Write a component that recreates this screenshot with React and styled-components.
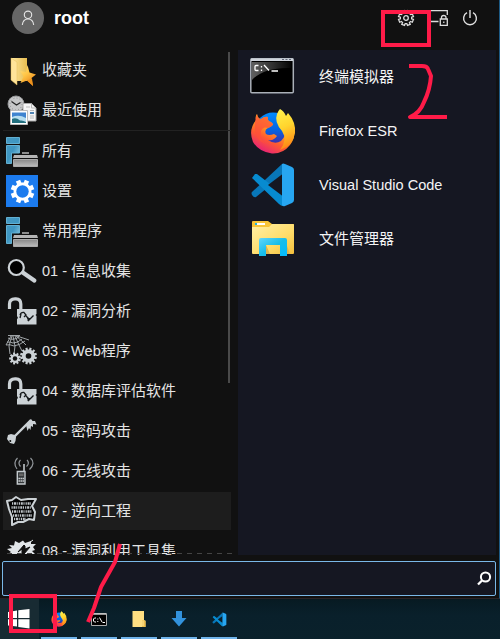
import React from 'react';
import styled, { createGlobalStyle } from 'styled-components';

const Global = createGlobalStyle`
  * { box-sizing: border-box; }
  html, body { margin: 0; padding: 0; }
  body { background: #08202a; overflow: hidden; }
`;

const Screen = styled.div`
  position: relative;
  width: 500px;
  height: 639px;
  overflow: hidden;
  display: flex;
  flex-direction: column;
  font-family: "Liberation Sans", "Noto Sans CJK SC", sans-serif;
  font-size: 15px;
  color: #e4e4e4;
`;

const MenuWindow = styled.div`
  display: flex;
  flex-direction: column;
  height: 599px;
  background: #111;
  border-right: 1px solid #1d5a84;
  border-bottom: 1px solid #2a2226;
`;

const Header = styled.header`
  display: flex;
  align-items: flex-start;
  height: 50px;
  padding: 2px 21px 0 12px;
`;

const Avatar = styled.div`
  width: 32px;
  height: 32px;
  border-radius: 50%;
  background: #666;
  display: flex;
  align-items: center;
  justify-content: center;
`;

const UserName = styled.div`
  margin-left: 10px;
  font-size: 18px;
  font-weight: 700;
  line-height: 32px;
  color: #fff;
`;

const HeaderActions = styled.div`
  display: flex;
  gap: 16px;
  margin-left: auto;
  padding-top: 8px;
`;

const Body = styled.div`
  display: flex;
  height: 505px;
`;

const Sidebar = styled.nav`
  display: flex;
  width: 238px;
  padding-left: 3px;
`;

const CategoryList = styled.div`
  display: flex;
  flex-direction: column;
  gap: 2px;
  width: 228px;
  margin-right: -3px;
  padding-top: 1px;
  overflow: hidden;
`;

const Category = styled.div`
  flex: none;
  display: flex;
  align-items: center;
  height: 38px;
  padding-left: 3px;
  gap: 4px;
  background: ${(p) => (p.$active ? '#1d1d1d' : 'transparent')};
`;

const Label = styled.span`
  line-height: 18px;
  white-space: pre;
`;

const Latin = styled.span`
  font-size: 14.55px;
`;

const Divider = styled.div`
  flex: none;
  height: 1px;
  margin: 0 0 -2px -2px;
  background: #222;
  transform: translateY(-1px);
`;

const Thumb = styled.div`
  width: 2px;
  height: 331px;
  margin-top: 2px;
  background: #4a4a4a;
`;

const ClipEdge = styled.div`
  position: absolute;
  left: 7px;
  top: 553px;
  width: 225px;
  height: 1px;
  background: repeating-linear-gradient(90deg, #444 0 5px, transparent 5px 10px);
`;

const AppPanel = styled.main`
  width: 258px;
  padding-left: 12px;
  background: #151722;
`;

const AppEntry = styled.div`
  display: flex;
  align-items: center;
  height: 54px;
  gap: 23px;
  color: #f4f4f4;
`;

const SearchBox = styled.div`
  display: flex;
  align-items: center;
  justify-content: flex-end;
  width: 494px;
  height: 35px;
  margin: 6px 0 0 2px;
  padding-right: 3px;
  border: 1px solid #7ab8e8;
  border-radius: 2px;
  background: #151722;
`;

const Taskbar = styled.footer`
  display: flex;
  height: 40px;
  background: linear-gradient(#071a22, #09202b 40%, #0a212b);
`;

const StartButton = styled.div`
  width: 39px;
  padding: 10px 0 0 8px;
  background: #182b33;
`;

const Task = styled.div`
  display: flex;
  align-items: center;
  justify-content: center;
  width: 36px;
  height: 40px;
  margin-left: ${(p) => (p.$first ? 2 : 4)}px;
  border-bottom: 2px solid #70b5ec;
  padding-top: 2px;
`;

const Markup = styled.svg`
  position: absolute;
  inset: 0;
  pointer-events: none;
`;

const Icon = styled.svg`
  display: block;
  flex: none;
  overflow: visible;
`;

const Icon32 = ({ children }) => (
  <Icon width="32" height="32" viewBox="0 0 32 32">{children}</Icon>
);

const gearPath = (cx, cy, teeth, outer, inner, tw = 0.5) => {
  const pts = [];
  const step = (Math.PI * 2) / teeth;
  for (let i = 0; i < teeth; i++) {
    const a = i * step + step / 2;
    [[-0.32, inner], [-tw / 2, outer], [tw / 2, outer], [0.32, inner]].forEach(([k, r]) => {
      pts.push(`${(cx + Math.cos(a + k * step) * r).toFixed(2)} ${(cy + Math.sin(a + k * step) * r).toFixed(2)}`);
    });
  }
  return `M${pts.join('L')}Z`;
};

const StarFolder = () => (
  <Icon32>
    <defs>
      <linearGradient id="fold" x2="1"><stop stopColor="#ffe9a3" /><stop offset="1" stopColor="#e8bd50" /></linearGradient>
      <linearGradient id="star" x2=".6" y2="1"><stop stopColor="#ffe68a" /><stop offset=".5" stopColor="#ffc545" /><stop offset="1" stopColor="#e98518" /></linearGradient>
    </defs>
    <path d="M5 4H21V27H9L5 23Z" fill="url(#fold)" />
    <path d="M5 4L11 8V31L5 26Z" fill="#ffe49a" stroke="#e6bc59" strokeWidth=".5" />
    <path d="M21.500 11L23.500 18.500L30 20.500L25.500 24L27 32L21 26.500L14.500 29L17.500 22.500L14 17L20 18Z" fill="url(#star)" />
    <path d="M26 24.500L27 32L21 26.500" fill="#ed921d" />
  </Icon32>
);

const Recent = () => (
  <Icon32>
    <circle cx="10" cy="10" r="8" fill="#c6c7c8" stroke="#97989a" />
    <circle cx="10" cy="10" r="6" fill="none" stroke="#777" strokeDasharray=".7 2.44" />
    <path d="M5.500 7.500L10.500 11L14.500 8.500" fill="none" stroke="#222" strokeWidth="1.200" />
    <path d="M17 9.500H25.500L30 14V27H17Z" fill="#f5f5f5" stroke="#aaa" />
    <path d="M25.500 9.500V14H30M20 13H24M24 16.500H28M24 22H28M24 24H28" fill="none" stroke="#b9b9b9" />
    <path d="M24 18H28V20H24Z" fill="#4f83b3" />
    <path d="M4.500 16.500H21.500V30.500H4.500Z" fill="#fff" stroke="#bbb" />
    <path d="M6 18.500H20V29H6Z" fill="#3f84d0" />
    <path d="M6 23Q13 20 20 24V29H6Z" fill="#b7def0" />
    <path d="M6 25Q10 23 14 26.500Q17 26 20 28V29H6Z" fill="#23707f" />
  </Icon32>
);

const Toolbox = () => (
  <Icon32>
    <defs>
      <linearGradient id="blue" x2="1" y2="1"><stop stopColor="#4799c2" /><stop offset=".5" stopColor="#3e96c2" /><stop offset="1" stopColor="#9bd0e6" /></linearGradient>
      <linearGradient id="gray" x2="0" y2="1"><stop stopColor="#888" /><stop offset="1" stopColor="#bbb" /></linearGradient>
    </defs>
    <path d="M.5 2.500H13.500V8.500H.5ZM.5 10.500H13.500V18H5.500V28.500H.5Z" fill="url(#blue)" stroke="#62b0d2" />
    <path d="M16 17H23V19H16Z" fill="#8c8c8c" />
    <path d="M8 20H31L32 23H7Z" fill="#b4b4b4" />
    <path d="M7.500 24.500H31.500V31.500H7.500Z" fill="url(#gray)" stroke="#aaa" />
  </Icon32>
);

const SettingsTile = () => (
  <Icon32>
    <path d="M0 0H32V32H0Z" fill="#1c7bee" />
    <path d={gearPath(16.500, 16.500, 8, 12, 9)} fill="#fff" />
    <circle cx="16.500" cy="16.500" r="6.200" fill="#1c7bee" />
  </Icon32>
);

const Magnifier = () => (
  <Icon32>
    <path d="M16 17L28.300 25.500" stroke="#ccd2d6" strokeWidth="4.300" strokeLinecap="round" />
    <circle cx="10.300" cy="12.500" r="7.500" fill="#000" stroke="#ccd2d6" strokeWidth="2.200" />
  </Icon32>
);

const Unlock = () => (
  <Icon32>
    <path d="M3.500 14V9Q3.500 3.800 9 3.800H10Q14.800 4 14.800 9V14" fill="none" stroke="#ccd2d6" strokeWidth="3.200" />
    <path d="M11 14H30.500V19L29.500 20L30.500 21V29.500H11V24L12 23L11 21Z" fill="#ccd2d6" />
    <path d="M14 20Q15 17 18 17.500L20 20L18 22M15 19L14 23M20 21L23 24L22 26L27.500 20.500" fill="none" stroke="#15181a" strokeWidth="1.300" />
    <path d="M21 23L25 23L22 26Z" fill="#15181a" />
  </Icon32>
);

const WebGears = () => (
  <Icon32>
    <path d="M2 .5H14M5 1L0 10M6 1L3 11L4 19M7 1L9 11L8 19M9 1L13 10L16 16M10 1L17 7L20 10M11 1L23 5M2 3Q7 6 13 2M1 7Q5 7 7 8Q12 8 16 4M0 10Q4 9 8 11Q14 10 19 6" fill="none" stroke="#aeb3b7" strokeWidth=".9" />
    <path d={gearPath(22.500, 21, 12, 8.500, 6.500)} fill="#ccd2d6" /><circle cx="22.500" cy="21" r="2.800" fill="#111" />
    <path d={gearPath(9, 23.500, 9, 6, 4.400)} fill="#ccd2d6" /><circle cx="9" cy="23.500" r="2.200" fill="#111" />
  </Icon32>
);

const KeyIcon = () => (
  <Icon32>
    <path d="M8 22L25 5" stroke="#ccd2d6" strokeWidth="2.400" />
    <path d="M20 10L21.500 16L23 13L24.500 15L25 11L27 12L27 9L30.500 9.500L29 6L26.500 6L25 4Z" fill="#ccd2d6" />
    <path d="M2 20L5 19L9 20L10 22L9.500 26L8 29L4 28L1 24Z" fill="#ccd2d6" />
    <circle cx="4.300" cy="26" r="1" fill="#111" />
  </Icon32>
);

const Phone = () => (
  <Icon32>
    <path d="M18 9V16" stroke="#ccd2d6" strokeWidth="1.500" />
    <path d="M11.300 16.500H19V29H11.300Z" fill="#34383b" stroke="#c3c9cd" strokeWidth="1.400" />
    <path d="M13 18.500H17.500V21H13Z" fill="#666" />
    <path d="M12.500 23.500H18M12.500 26H18" stroke="#d4d8da" strokeWidth="1.600" strokeDasharray="1.400 .6" />
    <path d="M14.500 5Q11.500 8 14.500 11.500M11.500 3Q6.500 8 11 14M21 5Q24 8 20.500 11.500M24.500 3Q30 8 23.500 14.500" fill="none" stroke="#92979b" strokeWidth="1.200" />
  </Icon32>
);

const Binary = () => (
  <Icon32>
    <path d="M1 6L6 5L10 2L15 5L22 4L30 4L26 11L29 17L28 25L23 24L17 27L12 27L6 30L6 22L3 14Z" fill="#050505" stroke="#ccd2d6" strokeWidth="2" strokeLinejoin="round" />
    <path d="M6 8.500H25M5.500 12.500H25M6 16.500H26M7 20.500H26M8 24H20" stroke="#c0c6ca" strokeWidth="2.500" strokeDasharray="1.200 .8 2 .7 1 1.100" />
  </Icon32>
);

const Burst = () => (
  <Icon32>
    <path d="M3 10L8 10.500L9 6L13 8L17 5.500L19 8L25 6L25 9L30 9L27 12L29 15L26 16L29 19H2L5 17L1 14L6 13Z" fill="#e1e5e8" />
    <path d="M18 10L12 17L16 14V19H18L24 12L19 14V11Z" fill="#111" stroke="#111" />
    <path d="M23 8L27 5" stroke="#e1e5e8" />
  </Icon32>
);

const TerminalBig = () => (
  <Icon width="46" height="46" viewBox="0 1 46 46">
    <defs><linearGradient id="term" x2="1"><stop stopColor="#606060" /><stop offset="1" stopColor="#050505" /></linearGradient></defs>
    <rect x=".8" y="5.800" width="42.500" height="34" rx="1" fill="#000" stroke="#aab0b8" strokeWidth="1.500" />
    <path d="M1 5.500H43V8H1Z" fill="#ced3db" />
    <path d="M32 6.500H42" stroke="#63697a" strokeDasharray="2 1.500" />
    <path d="M2 9H41V15Q14 14 2 27Z" fill="url(#term)" />
    <path d="M8.500 12.500H6Q5 12.500 5 13.500V16.500Q5 17.500 6 17.500H8.500M11.500 13V14.500M11.500 16.500V18M14 12L19 17.500M21.500 18H28" fill="none" stroke="#fff" strokeWidth="1.300" />
  </Icon>
);

const Firefox = ({ size = 46 }) => (
  <Icon width={size} height={size} viewBox="0 0 46 46">
    <defs>
      <linearGradient id="ffBody" x1=".8" x2=".2" y2="1"><stop stopColor="#fff24a" /><stop offset=".35" stopColor="#ffb11c" /><stop offset=".65" stopColor="#ff5b30" /><stop offset="1" stopColor="#e31587" /></linearGradient>
      <linearGradient id="ffBlue" x1=".5" x2=".5" y2="1"><stop stopColor="#008cff" /><stop offset=".5" stopColor="#0860df" /><stop offset="1" stopColor="#5b168b" /></linearGradient>
      <linearGradient id="ffTail" x2=".2" y2="1"><stop stopColor="#fff24f" /><stop offset=".5" stopColor="#ffd52e" /><stop offset="1" stopColor="#ff8a16" /></linearGradient>
    </defs>
    <circle cx="23" cy="23" r="18.500" fill="url(#ffBlue)" />
    <path d="M7 6Q8 11 11 11Q15 8 18 9Q17 13 21 14L23 16Q23 18 18 20Q14 22 16 26Q19 28 24 26L27 28Q24 33 18 32Q25 37 31 33Q37 28 36 16L41 14Q48 27 40 37Q33 46 22 45.500Q9 44 3 34Q-2 22 6 12Q5 8 7 6Z" fill="url(#ffBody)" />
    <path d="M30 1Q34 3 36 8L38 5Q46 14 45 25Q43 38 30 42Q38 32 32 23Q24 14 27 6Q28 3 30 1Z" fill="url(#ffTail)" />
    <path d="M7 6Q8 11 11 11Q15 8 18 9Q17 13 21 14L23 16Q23 18 18 20Q13 18 11 23Q9 31 16 36Q7 33 5 24Q4 13 7 6Z" fill="#ff4f3b" opacity=".75" />
  </Icon>
);

const VSCode = ({ size = 46 }) => (
  <Icon width={size} height={size} viewBox="0 0 46 46">
    <path d="M2 30L32 2V14L6 35Q4 36 2 33Q1 31 2 30Z" fill="#0877b9" />
    <path d="M2 16L5 12Q6 12 7 12L33 32V44Q31 44 29 42Z" fill="#078bd0" />
    <path d="M32.500 12V34L18 23Z" fill={size > 30 ? '#151722' : '#09202b'} />
    <path d="M32 2Q33 1 35 2L42 5Q44 6 44 8V38Q44 40 42 41L35 44Q33 45 32 43V2Z" fill="#27a6f1" />
  </Icon>
);

const FileManager = () => (
  <Icon width="46" height="46" viewBox="0 0 46 46">
    <defs>
      <linearGradient id="files" x2="1" y2="1"><stop stopColor="#fff0a6" /><stop offset=".6" stopColor="#ffdc69" /><stop offset="1" stopColor="#f4bf3d" /></linearGradient>
      <linearGradient id="clip" x2="1" y2="1"><stop stopColor="#62d6fa" /><stop offset=".5" stopColor="#18bdea" /><stop offset="1" stopColor="#00baff" /></linearGradient>
    </defs>
    <path d="M2 6Q2 5 3 5H18L22 8H43Q44 8 44 9V14H2Z" fill="#f8c438" />
    <path d="M2 11H19L22 8H43Q44 8 44 9V37Q44 38 43 38H3Q2 38 2 37Z" fill="url(#files)" />
    <path d="M5 7H15V9H5Z" fill="#fff" /><path d="M5 7H7V9H5Z" fill="#22b5da" />
    <path d="M16 29L20 38H16ZM37 30L40 38H37Z" fill="#ddb34d" />
    <path d="M9 24Q9 22 11 22H35Q37 22 37 24V40H30V29H16V40H9Z" fill="url(#clip)" />
  </Icon>
);

const TerminalSmall = () => (
  <Icon width="16" height="16" viewBox="0 0 16 16">
    <path d="M.5 2.500H15.500V14.500H.5Z" fill="#000" stroke="#aaa" />
    <path d="M1 3H15" stroke="#c8c8c8" strokeWidth="1.500" />
    <path d="M5 7H3.500L2.500 8V10L3.500 11H5M6.800 7.500V8.500M6.800 10V11M8.500 6.500L11 11M11.500 11.500H14" fill="none" stroke="#fff" />
  </Icon>
);

const FolderSmall = () => (
  <Icon width="16" height="16" viewBox="0 0 16 16">
    <path d="M1.500 0H13V9L14.500 10V16H1.500Z" fill="#ffdf82" /><path d="M11 9.500H14.500V16H11Z" fill="#eebf4b" /><path d="M12 10V15" stroke="#ffe9a3" />
  </Icon>
);

const DownSmall = () => (
  <Icon width="16" height="16" viewBox="0 0 16 16">
    <path d="M5 0H11V7H15.500L8 15.500L.5 7H5Z" fill="#3292dc" />
  </Icon>
);

const categories = [
  ['', '收藏夹', StarFolder], ['', '最近使用', Recent], null,
  ['', '所有', Toolbox], ['', '设置', SettingsTile], ['', '常用程序', Toolbox],
  ['01 - ', '信息收集', Magnifier], ['02 - ', '漏洞分析', Unlock], ['03 - Web', '程序', WebGears],
  ['04 - ', '数据库评估软件', Unlock], ['05 - ', '密码攻击', KeyIcon], ['06 - ', '无线攻击', Phone],
  ['07 - ', '逆向工程', Binary, true], ['08 - ', '漏洞利用工具集', Burst],
];

const apps = [
  ['', '终端模拟器', TerminalBig], ['Firefox ESR', '', Firefox],
  ['Visual Studio Code', '', VSCode], ['', '文件管理器', FileManager],
];

const tasks = [
  <Firefox key="f" size={16} />, <TerminalSmall key="t" />, <FolderSmall key="d" />,
  <DownSmall key="a" />, <VSCode key="v" size={15} />,
];

export default function App() {
  return (
    <Screen>
      <Global />
      <MenuWindow>
        <Header>
          <Avatar>
            <Icon width="16" height="16" viewBox="0 0 16 16" fill="none" stroke="#e5e5e5" strokeWidth="1.100">
              <circle cx="8" cy="4.800" r="3.700" /><path d="M2.300 15Q3 9 8 9T13.700 15" />
            </Icon>
          </Avatar>
          <UserName>root</UserName>
          <HeaderActions>
            <Icon width="16" height="16" viewBox="0 0 16 16" fill="none" stroke="#ddd" strokeWidth="1.300">
              <path d={gearPath(8, 8, 8, 7.600, 5.700)} /><circle cx="8" cy="8" r="2.300" />
            </Icon>
            <Icon width="16" height="16" viewBox="0 0 16 16" fill="none" stroke="#ddd" strokeWidth="1.300">
              <path d="M0 .6H17.300V5M0 11.500H8.500M10.300 9H17.300V15.400H10.300ZM11.500 9V7.500Q11.500 5.500 13.700 5.500T16 7.500V9M13.800 11.500V13" />
            </Icon>
            <Icon width="16" height="16" viewBox="0 0 16 16" fill="none" stroke="#e2e2e2" strokeWidth="1.400">
              <path d="M8 0V8M5 2.700A6.400 6.400 0 1 0 11 2.700" />
            </Icon>
          </HeaderActions>
        </Header>
        <Body>
          <Sidebar>
            <CategoryList>
              {categories.map((c, i) => {
                if (!c) return <Divider key={i} />;
                const [latin, cjk, Glyph, active] = c;
                return (
                  <Category key={i} $active={active}>
                    <Glyph />
                    <Label>{latin && <Latin>{latin}</Latin>}{cjk}</Label>
                  </Category>
                );
              })}
            </CategoryList>
            <Thumb />
          </Sidebar>
          <AppPanel>
            {apps.map(([latin, cjk, Glyph], i) => (
              <AppEntry key={i}>
                <Glyph />
                <Label>{latin && <Latin>{latin}</Latin>}{cjk}</Label>
              </AppEntry>
            ))}
          </AppPanel>
        </Body>
        <SearchBox>
          <Icon width="16" height="16" viewBox="0 0 16 16" fill="none" stroke="#fff">
            <circle cx="9.500" cy="6" r="4.600" strokeWidth="2" /><path d="M6 9.500L2 13.500" strokeWidth="2.300" />
          </Icon>
        </SearchBox>
      </MenuWindow>
      <ClipEdge />
      <Taskbar>
        <StartButton>
          <Icon width="22" height="20" viewBox="0 0 22 20" fill="#fff">
            <path d="M0 3L9 1.500V9H0ZM10.300 1.300L21.500 0V9H10.300ZM0 10.300H9V17.500L0 16.500ZM10.300 10.300H21.500V19.500L10.300 18Z" />
          </Icon>
        </StartButton>
        {tasks.map((t, i) => <Task key={i} $first={i === 0}>{t}</Task>)}
      </Taskbar>
      <Markup width="500" height="639" viewBox="0 0 500 639" fill="none" stroke="#ff1b48" strokeWidth="4">
        <path d="M383 12H429V45H383ZM11 596H55V631H11Z" />
        <path d="M409 66H422Q427 66 428 69L431 76Q430 90 424 102Q420 113 410 117H447" strokeLinejoin="round" />
        <path d="M120 544L115 562L101 587L94 608L88 622" strokeLinejoin="round" />
      </Markup>
    </Screen>
  );
}
